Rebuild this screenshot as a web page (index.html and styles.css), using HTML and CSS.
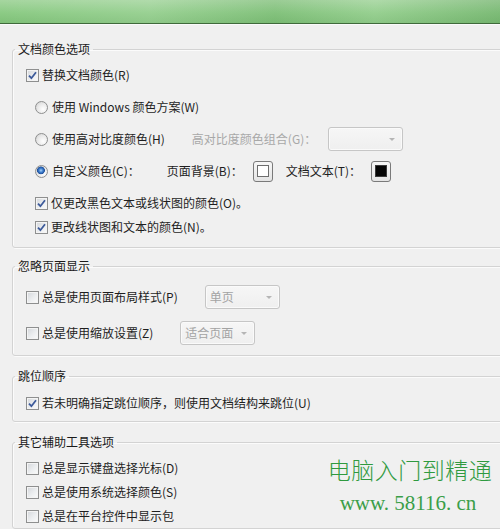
FILE: index.html
```html
<!DOCTYPE html>
<html lang="zh-CN">
<head>
<meta charset="utf-8">
<title>辅助工具选项</title>
<link rel="stylesheet" href="styles.css">
</head>
<body>
<div class="band"></div>
<main class="page">
  <fieldset class="group g1">
    <legend>文档颜色选项</legend>
    <div class="row r32 lvl1">
      <span class="cb on"><svg width="9" height="9" viewBox="0 0 9 9"><path d="M1 4.6 L3.4 7.2 L8 1.2" fill="none" stroke="#3c5a9a" stroke-width="1.8"/></svg></span>
      <span class="lbl">替换文档颜色(R)</span>
    </div>
    <div class="row r32 lvl2">
      <span class="rb"></span>
      <span class="lbl">使用 Windows 颜色方案(W)</span>
    </div>
    <div class="row r32 lvl2">
      <span class="rb"></span>
      <span class="lbl">使用高对比度颜色(H)</span>
      <span class="lbl dim gap-l">高对比度颜色组合(G)：</span>
      <span class="dd w75 gap-s"><span class="arrow"></span></span>
    </div>
    <div class="row r32 lvl2">
      <span class="rb on"></span>
      <span class="lbl">自定义颜色(C)：</span>
      <span class="lbl gap-l">页面背景(B)：</span>
      <span class="swatch sw1"><span class="chip white"></span></span>
      <span class="lbl">文档文本(T)：</span>
      <span class="swatch sw2"><span class="chip black"></span></span>
    </div>
    <div class="row r24 lvl2 after">
      <span class="cb on"><svg width="9" height="9" viewBox="0 0 9 9"><path d="M1 4.6 L3.4 7.2 L8 1.2" fill="none" stroke="#3c5a9a" stroke-width="1.8"/></svg></span>
      <span class="lbl">仅更改黑色文本或线状图的颜色(O)。</span>
    </div>
    <div class="row r24 lvl2">
      <span class="cb on"><svg width="9" height="9" viewBox="0 0 9 9"><path d="M1 4.6 L3.4 7.2 L8 1.2" fill="none" stroke="#3c5a9a" stroke-width="1.8"/></svg></span>
      <span class="lbl">更改线状图和文本的颜色(N)。</span>
    </div>
  </fieldset>

  <fieldset class="group g2">
    <legend>忽略页面显示</legend>
    <div class="row r32 lvl1">
      <span class="cb"></span>
      <span class="lbl">总是使用页面布局样式(P)</span>
      <span class="dd w75 gap-l"><span class="ddtext">单页</span><span class="arrow"></span></span>
    </div>
    <div class="row r32 lvl1 g2b">
      <span class="cb"></span>
      <span class="lbl">总是使用缩放设置(Z)</span>
      <span class="dd w75 gap-l"><span class="ddtext">适合页面</span><span class="arrow"></span></span>
    </div>
  </fieldset>

  <fieldset class="group g3">
    <legend>跳位顺序</legend>
    <div class="row r24 lvl1">
      <span class="cb on"><svg width="9" height="9" viewBox="0 0 9 9"><path d="M1 4.6 L3.4 7.2 L8 1.2" fill="none" stroke="#3c5a9a" stroke-width="1.8"/></svg></span>
      <span class="lbl">若未明确指定跳位顺序，则使用文档结构来跳位(U)</span>
    </div>
  </fieldset>

  <fieldset class="group g4">
    <legend>其它辅助工具选项</legend>
    <div class="row r24 lvl1">
      <span class="cb"></span>
      <span class="lbl">总是显示键盘选择光标(D)</span>
    </div>
    <div class="row r24 lvl1">
      <span class="cb"></span>
      <span class="lbl">总是使用系统选择颜色(S)</span>
    </div>
    <div class="row r24 lvl1">
      <span class="cb"></span>
      <span class="lbl">总是在平台控件中显示包</span>
    </div>
  </fieldset>

  <div class="watermark">
    <div class="wm-cn">电脑入门到精通</div>
    <div class="wm-url">www. 58116. cn</div>
  </div>
</main>
</body>
</html>
```

FILE: styles.css
```css
html, body {
  margin: 0;
  padding: 0;
  overflow: hidden;
  background: #f0f0f0;
}

body {
  width: 500px;
  height: 529px;
  font-family: "Noto Sans CJK SC", "Noto Sans", sans-serif;
  font-size: 12px;
  color: #1e1e1e;
}

.band {
  height: 23px;
  background:
    linear-gradient(90deg, rgba(255,255,255,0) 0%, rgba(255,255,255,0.12) 30%, rgba(60,120,60,0.1) 55%, rgba(255,255,255,0.1) 75%, rgba(60,120,60,0.18) 100%),
    linear-gradient(180deg, #a6d6a0 0%, #8ccb85 55%, #7fc078 100%);
  border-bottom: 1px solid #3f6a3b;
  box-shadow: 0 1px 0 #fafafa;
}

.page {
  position: relative;
  padding-top: 17px;
  height: 488px;
}

.group {
  margin: 0 -20px 0 12px;
  padding: 0;
  border: 1px solid #d3d3d3;
  border-radius: 3px;
  box-shadow: inset 1px 1px 0 #fbfbfb, 1px 1px 0 #fbfbfb;
  min-width: 0;
}

.group legend {
  margin-left: 2px;
  padding: 0 3px;
  line-height: 16px;
  font-size: 12px;
  color: #1a1a1a;
}

.g1 { padding-top: 2px; padding-bottom: 8px; }
.g2 { margin-top: 10px; padding-top: 7px; padding-bottom: 6px; }
.g3 { margin-top: 12px; padding-top: 7px; padding-bottom: 6px; }
.g4 { margin-top: 12px; padding-top: 6px; }

.row {
  display: flex;
  align-items: center;
  white-space: nowrap;
}

.r32 { height: 32px; }
.r24 { height: 24px; }
.after { margin-top: 4px; }
.g2b { margin-top: 4px; }

.lvl1 { padding-left: 13px; }
.lvl2 { padding-left: 22px; }

.lbl {
  line-height: 16px;
  margin-left: 3px;
}

.rb + .lbl { margin-left: 4px; }

.dim { color: #a8a8a8; }

.gap-l { margin-left: 27px; }
.gap-s { margin-left: 12px; }

.sw1 { margin-left: 10px; }
.sw1 + .lbl { margin-left: 13px; }
.sw2 { margin-left: 10px; }

/* checkbox */
.cb {
  width: 13px;
  height: 13px;
  box-sizing: border-box;
  border: 1px solid #8e8f8f;
  background: linear-gradient(135deg, #d3d6da 0%, #eceef0 55%, #fbfbfb 100%);
  box-shadow: inset 0 0 0 1px #f4f4f4;
  display: flex;
  align-items: center;
  justify-content: center;
  flex: none;
}

.cb svg { display: block; }

/* radio */
.rb {
  width: 13px;
  height: 13px;
  box-sizing: border-box;
  border-radius: 50%;
  border: 1px solid #8e8f8f;
  background: radial-gradient(circle at 65% 65%, #ffffff 0%, #e8e8e8 55%, #c9c9c9 100%);
  flex: none;
}

.rb.on {
  background:
    radial-gradient(circle at 45% 40%, #a9d2f5 0px, #3f7fcf 2px, #1e4f99 3.6px, rgba(0,0,0,0) 4.2px),
    radial-gradient(circle at 65% 65%, #ffffff 0%, #e8e8e8 55%, #c9c9c9 100%);
}

/* dropdown (disabled) */
.dd {
  position: relative;
  height: 24px;
  box-sizing: border-box;
  border: 1px solid #c6c6c6;
  border-radius: 3px;
  background: linear-gradient(180deg, #f6f6f6, #efefef);
  box-shadow: inset 0 0 0 1px #fafafa;
  display: flex;
  align-items: center;
  flex: none;
}

.w75 { width: 75px; }

.ddtext {
  margin-left: 4px;
  color: #a3a3a3;
  line-height: 16px;
}

.arrow {
  position: absolute;
  right: 7px;
  top: 10px;
  width: 0;
  height: 0;
  border-left: 3px solid transparent;
  border-right: 3px solid transparent;
  border-top: 3px solid #b5b5b5;
}

/* color swatch */
.swatch {
  width: 20px;
  height: 21px;
  box-sizing: border-box;
  border: 1px solid #7a7a7a;
  border-radius: 3px;
  background: linear-gradient(180deg, #f7f7f7, #e4e4e4);
  display: flex;
  align-items: center;
  justify-content: center;
  flex: none;
}

.chip {
  width: 12px;
  height: 12px;
  box-sizing: border-box;
  border: 1px solid #6e6e6e;
}

.chip.white { background: #ffffff; }
.chip.black { background: #050505; border-color: #3a3a3a; }

/* watermark overlay */
.watermark {
  position: absolute;
  left: 327px;
  top: 430px;
  color: #2f9a3f;
  text-align: center;
  width: 166px;
}

.wm-cn {
  font-family: "Noto Sans CJK SC", sans-serif;
  font-weight: 300;
  font-size: 23px;
  line-height: 30px;
  letter-spacing: 0.5px;
}

.wm-url {
  font-family: "Liberation Serif", serif;
  font-size: 21px;
  line-height: 30px;
  margin-top: 4px;
  margin-left: -4px;
  color: #3a9e48;
}
```
